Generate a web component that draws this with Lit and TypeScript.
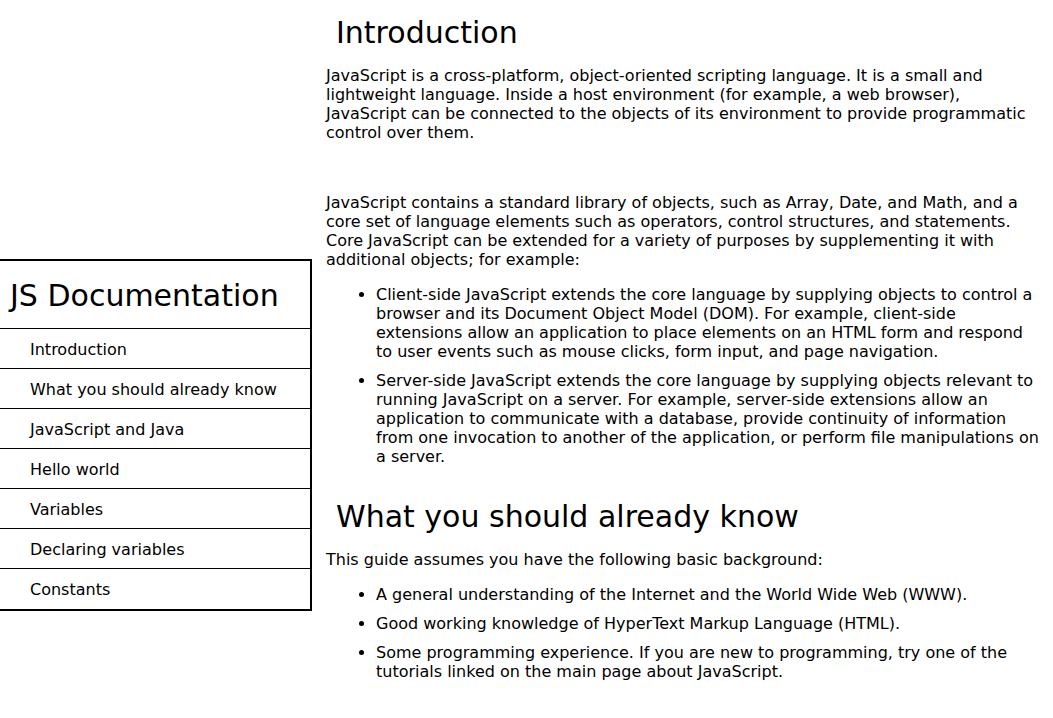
import { LitElement, html, css } from "lit";
import { customElement } from "lit/decorators.js";

interface Section {
  title: string;
  paragraphs: string[];
  items: string[];
}

const LINKS = [
  "Introduction",
  "What you should already know",
  "JavaScript and Java",
  "Hello world",
  "Variables",
  "Declaring variables",
  "Constants",
];

const SECTIONS: Section[] = [
  {
    title: "Introduction",
    paragraphs: [
      "JavaScript is a cross-platform, object-oriented scripting language. It is a small and lightweight language. Inside a host environment (for example, a web browser), JavaScript can be connected to the objects of its environment to provide programmatic control over them.",
      "JavaScript contains a standard library of objects, such as Array, Date, and Math, and a core set of language elements such as operators, control structures, and statements. Core JavaScript can be extended for a variety of purposes by supplementing it with additional objects; for example:",
    ],
    items: [
      "Client-side JavaScript extends the core language by supplying objects to control a browser and its Document Object Model (DOM). For example, client-side extensions allow an application to place elements on an HTML form and respond to user events such as mouse clicks, form input, and page navigation.",
      "Server-side JavaScript extends the core language by supplying objects relevant to running JavaScript on a server. For example, server-side extensions allow an application to communicate with a database, provide continuity of information from one invocation to another of the application, or perform file manipulations on a server.",
    ],
  },
  {
    title: "What you should already know",
    paragraphs: ["This guide assumes you have the following basic background:"],
    items: [
      "A general understanding of the Internet and the World Wide Web (WWW).",
      "Good working knowledge of HyperText Markup Language (HTML).",
      "Some programming experience. If you are new to programming, try one of the tutorials linked on the main page about JavaScript.",
    ],
  },
];

const slug = (title: string) => title.replace(/ /g, "_");

@customElement("app-root")
export class AppRoot extends LitElement {
  static styles = css`
    :host {
      display: grid;
      grid-template-columns: 312px minmax(0, 1fr);
      column-gap: 14px;
      min-height: 100vh;
      background: #fff;
      color: #000;
      font: 16px/19px "DejaVu Sans", Verdana, sans-serif;
    }
    .nav {
      position: sticky;
      top: 0;
      height: 100vh;
      box-sizing: border-box;
      padding-top: 152px;
      display: flex;
      flex-direction: column;
      justify-content: center;
    }
    .menu {
      border: 2px solid #000;
      border-left: 0;
      padding-bottom: 1px;
    }
    .brand {
      padding: 17px 10px 15px;
      font-size: 30px;
      line-height: 35px;
      white-space: nowrap;
    }
    .link {
      display: block;
      border-top: 1px solid #000;
      padding: 11px 30px 9px;
      color: inherit;
      text-decoration: none;
      white-space: nowrap;
    }
    .doc {
      padding: 15px 10px 0 0;
    }
    .section {
      padding-bottom: 23px;
    }
    .heading {
      margin: 0;
      padding-left: 10px;
      font-size: 30px;
      font-weight: 400;
      line-height: 36px;
    }
    .text {
      margin: 15px 0 51px;
    }
    .text + .text {
      margin-top: 0;
    }
    .text.last {
      margin-bottom: 16px;
    }
    .list {
      margin: 0;
      padding-left: 50px;
    }
    .item {
      margin-bottom: 10px;
    }
  `;

  render() {
    return html`
      <nav class="nav">
        <div class="menu">
          <header class="brand">JS Documentation</header>
          ${LINKS.map((t) => html`<a class="link" href="#${slug(t)}">${t}</a>`)}
        </div>
      </nav>
      <main class="doc">
        ${SECTIONS.map(
          (s) => html`
            <section class="section" id=${slug(s.title)}>
              <h2 class="heading">${s.title}</h2>
              ${s.paragraphs.map(
                (p, i) =>
                  html`<p class="text ${i === s.paragraphs.length - 1 ? "last" : ""}">${p}</p>`,
              )}
              <ul class="list">
                ${s.items.map((item) => html`<li class="item">${item}</li>`)}
              </ul>
            </section>
          `,
        )}
      </main>
    `;
  }
}
